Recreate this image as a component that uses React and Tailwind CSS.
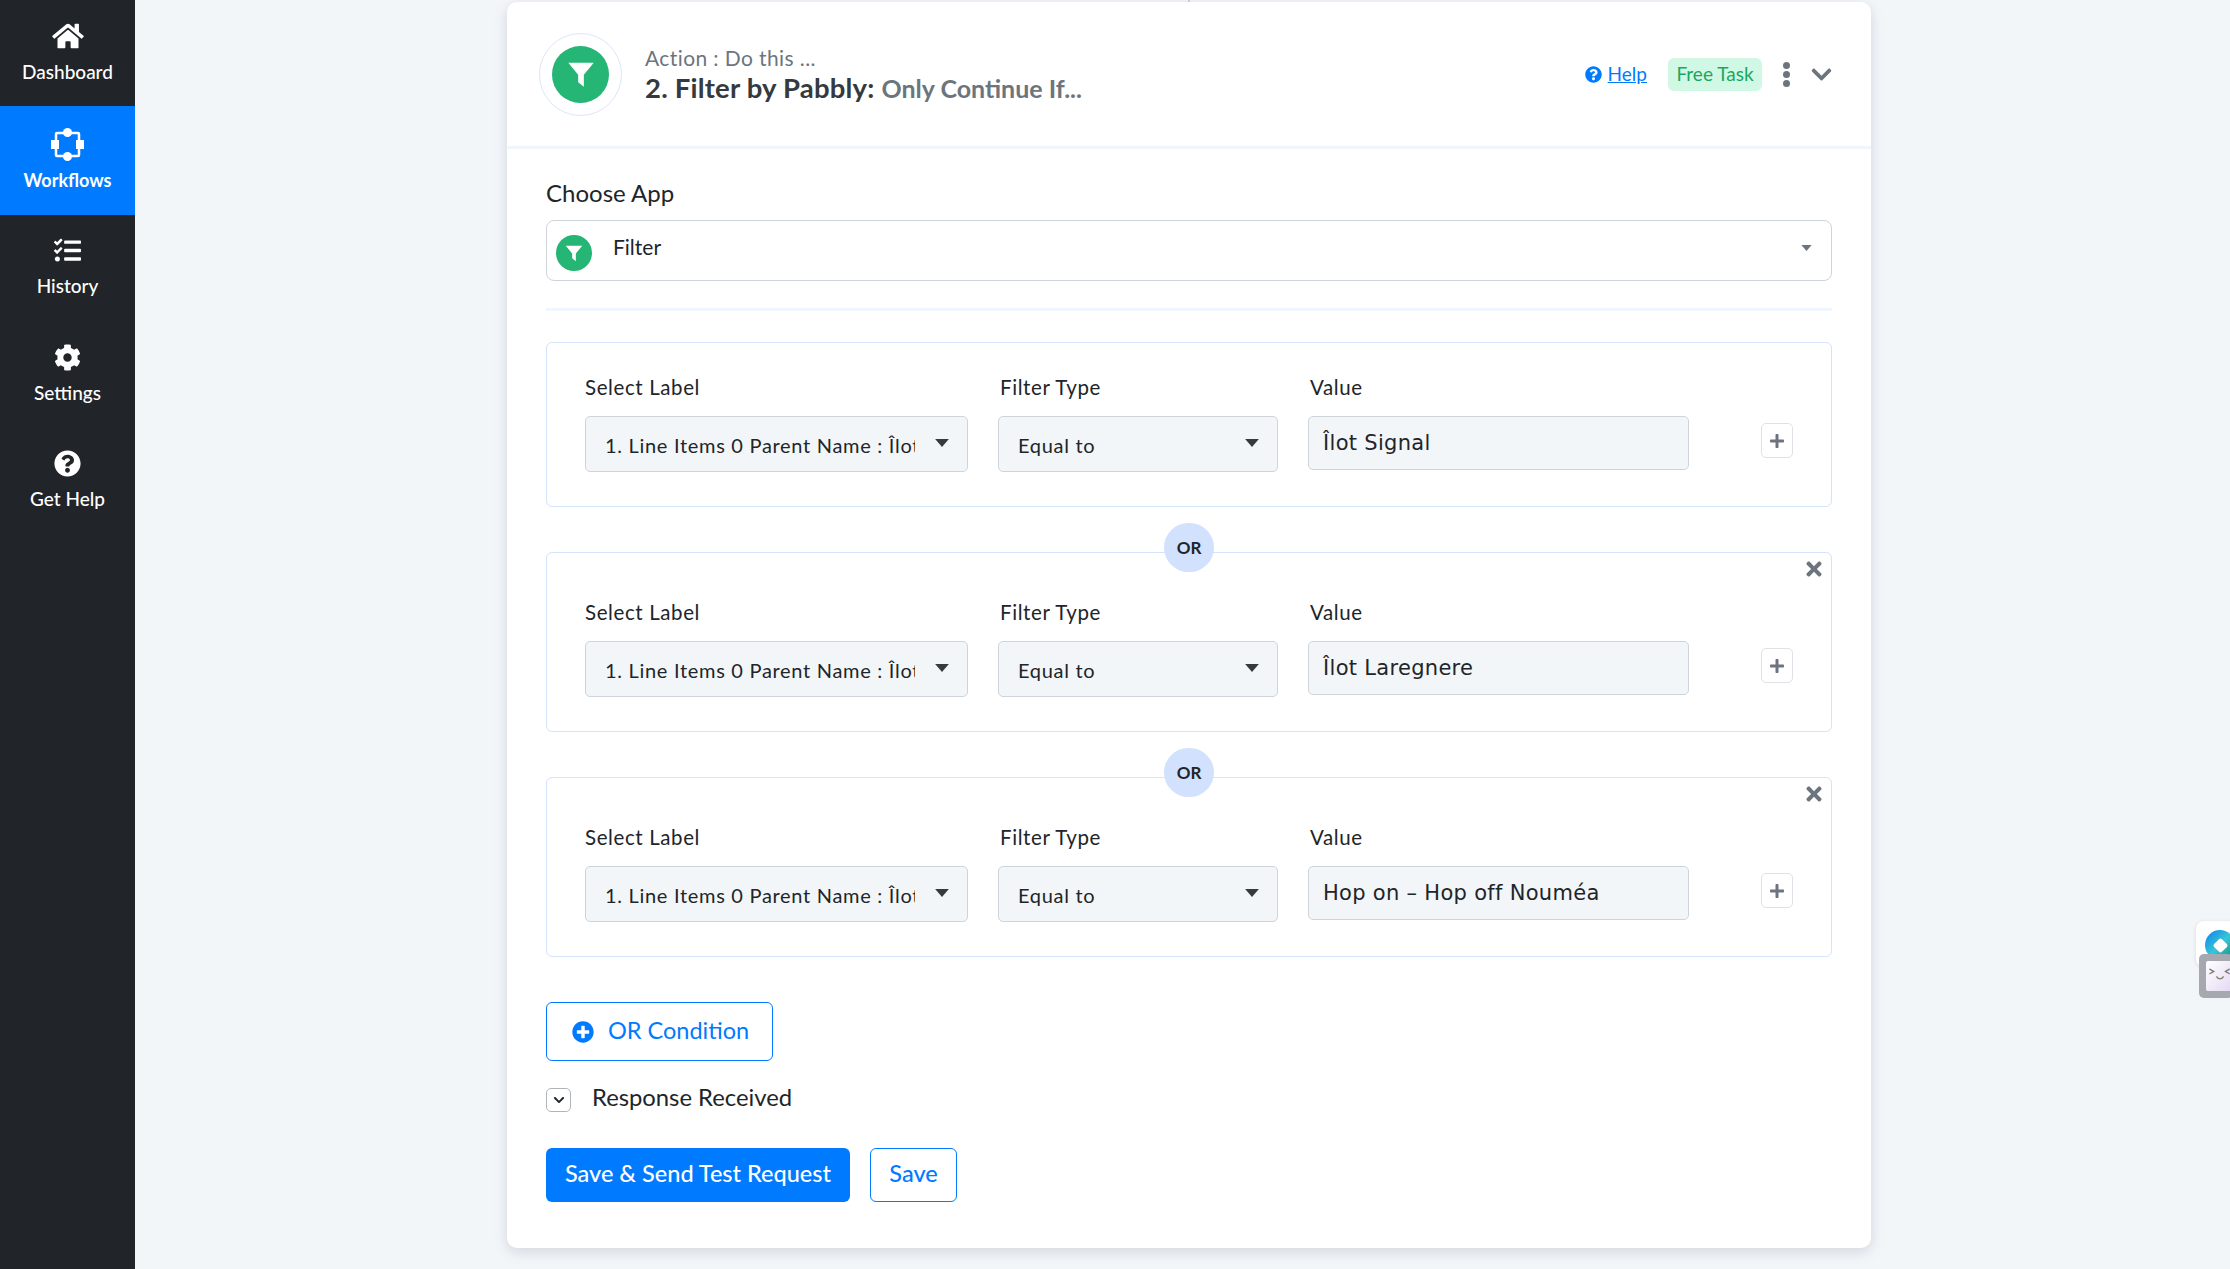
import React from "react";
import { FaHome, FaTasks, FaCog, FaQuestionCircle, FaChevronDown, FaPlus, FaTimes, FaPlusCircle } from "react-icons/fa";

const Funnel = ({ className }) => (
  <svg viewBox="0 0 24 24" className={className} fill="#fff">
    <path d="M3 4h18l-7 8.6V21l-4-3.2v-5.2z" />
  </svg>
);

const Caret = ({ className }) => (
  <svg viewBox="0 0 12 7" className={className} fill="currentColor">
    <path d="M0 0h12L6 7z" />
  </svg>
);

const WorkflowIcon = () => (
  <svg viewBox="0 0 33 33" className="w-[33px] h-[33px]" fill="#fff">
    <rect x="5" y="5" width="23" height="23" fill="none" stroke="#fff" strokeWidth="2.5" rx="1" />
    <circle cx="16.5" cy="4.5" r="4.5" />
    <circle cx="16.5" cy="28.5" r="4.5" />
    <rect x="0" y="12" width="8" height="9" />
    <rect x="25" y="12" width="8" height="9" />
  </svg>
);

const navItems = [
  { label: "Dashboard", icon: <FaHome className="w-[32px] h-[28px]" />, box: "h-[106px] pb-[3px]" },
  { label: "Workflows", icon: <WorkflowIcon />, active: true, box: "h-[108.5px]" },
  { label: "History", icon: <FaTasks className="w-[29px] h-[27px]" />, box: "h-[106.5px] pb-[3px]" },
  { label: "Settings", icon: <FaCog className="w-[27px] h-[27px]" />, box: "h-[106.5px] pb-[3px]" },
  { label: "Get Help", icon: <FaQuestionCircle className="w-[27px] h-[27px]" />, box: "h-[106.5px] pb-[3px]" },
];

const rows = [
  { value: "Îlot Signal" },
  { value: "Îlot Laregnere", removable: true },
  { value: "Hop on – Hop off Nouméa", removable: true },
];

const Select = ({ text, widthClass, clipClass }) => (
  <div className={`flex items-center justify-between h-[56px] bg-[#f3f6f9] border border-[#ced4da] rounded-[5px] pl-[19px] text-[#212529] text-[20px] tracking-[0.7px] ${widthClass}`}>
    <span className={`whitespace-nowrap overflow-hidden pt-[1px] ${clipClass}`}>{text}</span>
    <Caret className="w-[14px] h-[8px] text-[#343a40] mr-[18px] -mt-[2px] shrink-0" />
  </div>
);

const FilterRow = ({ value, removable }) => (
  <div className={`relative border border-[#d5e3fb] rounded-[6px] pl-[38px] ${removable ? "pt-[47px] pb-[34px]" : "pt-[32px] pb-[34px]"}`}>
    {removable && (
      <>
        <div className="absolute left-[617px] -top-[30px] w-[50px] h-[49px] rounded-full bg-[#d2e1fd] flex items-center justify-center text-[#212529] text-[17px] font-bold">
          OR
        </div>
        <FaTimes className="absolute right-[6px] top-[5px] w-[22px] h-[22px] text-[#6c757d]" />
      </>
    )}
    <div className="flex">
      <div className="w-[383px]">
        <div className="text-[20.5px] tracking-[0.6px] leading-[24px] text-[#212529] mb-[17px]">Select Label</div>
        <Select text="1. Line Items 0 Parent Name : Îlot Signal" widthClass="w-[383px]" clipClass="w-[310px]" />
      </div>
      <div className="w-[280px] ml-[30px]">
        <div className="text-[20.5px] tracking-[0.6px] leading-[24px] text-[#212529] mb-[17px] ml-[2px]">Filter Type</div>
        <Select text="Equal to" widthClass="w-[280px]" clipClass="" />
      </div>
      <div className="w-[381px] ml-[30px]">
        <div className="text-[20.5px] tracking-[0.6px] leading-[24px] text-[#212529] mb-[17px] ml-[2px]">Value</div>
        <div className="flex items-center h-[54px] bg-[#f3f6f9] border border-[#ced4da] rounded-[5px] pl-[14px] pt-[2px] text-[#212529] text-[21px] tracking-[0.3px] font-['DejaVu_Sans',sans-serif]">
          {value}
        </div>
      </div>
      <div className="ml-[72px] mt-[48px] w-[32px] h-[35px] border border-[#dee2e6] rounded-[5px] flex items-center justify-center text-[#6c757d]">
        <FaPlus className="w-[16px] h-[16px]" />
      </div>
    </div>
  </div>
);

export default function App() {
  return (
    <div className="flex h-[1269px] w-[2230px] overflow-hidden relative bg-[#f3f6f9] font-['Lato',sans-serif]">
      <aside className="w-[135px] shrink-0 bg-[#212529] text-white flex flex-col">
        {navItems.map((item) => (
          <div
            key={item.label}
            className={`flex flex-col items-center justify-center gap-[7px] ${item.box} ${item.active ? "bg-[#007bff]" : ""}`}
          >
            <div className="h-[33px] flex items-center justify-center">{item.icon}</div>
            <div className={`leading-[24px] ${item.active ? "font-bold text-[18px]" : "font-medium text-[19px]"}`}>{item.label}</div>
          </div>
        ))}
      </aside>

      <main className="flex-1 flex flex-col pl-[372px]">
        <div className="w-[1364px] flex flex-col items-center">
          <div className="w-[2px] h-[2px] bg-[#ced4da]"></div>
          <div className="w-full h-[1246px] bg-white rounded-[10px] shadow-[0_4px_14px_rgba(60,80,110,0.18)]">
            <header className="h-[147px] border-b-[3px] border-[#eff6fd] flex items-center pl-[32px] pr-[38px]">
              <div className="w-[83px] h-[83px] rounded-full border border-[#dbe6fb] flex items-center justify-center shrink-0">
                <div className="w-[57px] h-[57px] rounded-full bg-[#25b574] flex items-center justify-center">
                  <Funnel className="w-[34px] h-[34px]" />
                </div>
              </div>
              <div className="ml-[23px] mt-[2px]">
                <div className="text-[21px] tracking-[0.4px] leading-[26px] text-[#6c757d]">Action : Do this ...</div>
                <div className="text-[27.5px] tracking-[0.2px] leading-[33px] text-[#343a40] font-bold">
                  2. Filter by Pabbly: <span className="text-[25px] tracking-normal font-bold text-[#6c757d]">Only Continue If...</span>
                </div>
              </div>
              <div className="ml-auto flex items-center">
                <FaQuestionCircle className="w-[17px] h-[17px] text-[#007bff]" />
                <span className="ml-[6px] text-[19px] text-[#007bff] underline">Help</span>
                <div className="ml-[21px] w-[94px] h-[33px] rounded-[6px] bg-[#d1f7e5] text-[#17a862] text-[19px] flex items-center justify-center">Free Task</div>
                <div className="ml-[21px] flex flex-col gap-[2px]">
                  <span className="w-[7px] h-[7px] rounded-full bg-[#6c757d]"></span>
                  <span className="w-[7px] h-[7px] rounded-full bg-[#6c757d]"></span>
                  <span className="w-[7px] h-[7px] rounded-full bg-[#6c757d]"></span>
                </div>
                <FaChevronDown className="ml-[20px] w-[23px] h-[23px] text-[#6c757d]" />
              </div>
            </header>

            <div className="px-[39px]">
              <div className="pt-[29px] text-[24px] leading-[30px] text-[#212529] mb-[12px]">Choose App</div>
              <div className="h-[61px] border border-[#ced4da] rounded-[8px] flex items-center pl-[9px] pr-[18px]">
                <div className="w-[36px] h-[36px] rounded-full bg-[#25b574] flex items-center justify-center mt-[4px]">
                  <Funnel className="w-[22px] h-[22px]" />
                </div>
                <span className="ml-[21px] text-[21px] text-[#212529] -mt-[7px]">Filter</span>
                <Caret className="ml-auto w-[13px] h-[6px] text-[#6c757d] -mt-[5px]" />
              </div>
              <div className="h-[3px] bg-[#eff6fd] mt-[27px] mb-[31px]"></div>

              <div className="flex flex-col gap-[45px]">
                {rows.map((r) => (
                  <FilterRow key={r.value} value={r.value} removable={r.removable} />
                ))}
              </div>

              <div className="mt-[45px] w-[227px] h-[59px] border border-[#007bff] rounded-[6px] flex items-center pl-[25px] text-[#007bff]">
                <FaPlusCircle className="w-[22px] h-[22px]" />
                <span className="ml-[14px] text-[23.5px] -mt-[1px]">OR Condition</span>
              </div>

              <div className="mt-[27px] flex items-center h-[24px]">
                <div className="w-[25px] h-[24px] border border-[#adb5bd] rounded-[5px] flex items-center justify-center">
                  <FaChevronDown className="w-[12px] h-[12px] text-[#212529]" />
                </div>
                <span className="ml-[21px] text-[23.8px] text-[#212529] -mt-[4px]">Response Received</span>
              </div>

              <div className="mt-[36px] flex gap-[20px]">
                <div className="w-[304px] h-[54px] rounded-[6px] bg-[#007bff] text-white text-[23.5px] font-medium flex items-center justify-center pb-[2px]">
                  Save &amp; Send Test Request
                </div>
                <div className="w-[87px] h-[54px] rounded-[6px] border border-[#007bff] text-[#007bff] text-[23.5px] font-medium flex items-center justify-center pb-[2px]">
                  Save
                </div>
              </div>
            </div>
          </div>
          <div className="w-[2px] flex-1 h-[21px] bg-[#ced4da]"></div>
        </div>
      </main>

      <div className="absolute left-[2196px] top-[921px] w-[40px] h-[46px] bg-white rounded-[8px] shadow-[0_1px_4px_rgba(0,0,0,0.12)]">
        <div className="absolute left-[9px] top-[9px] w-[30px] h-[30px] rounded-full bg-gradient-to-br from-[#1d7be8] via-[#35c7d8] to-[#0b8a78] flex items-center justify-center">
          <div className="w-[11px] h-[11px] bg-white rotate-45 rounded-[2px]"></div>
        </div>
      </div>
      <div className="absolute left-[2199px] top-[954px] w-[34px] h-[44px] bg-[#a5a8ae] rounded-[5px] pl-[7px] py-[7px]">
        <div className="w-full h-full overflow-hidden bg-gradient-to-br from-white to-[#e4d8f2] rounded-[2px] text-[#777] text-[13px] leading-[20px] pl-[2px] font-bold whitespace-nowrap">
          &gt;‿&lt;
        </div>
      </div>
    </div>
  );
}
